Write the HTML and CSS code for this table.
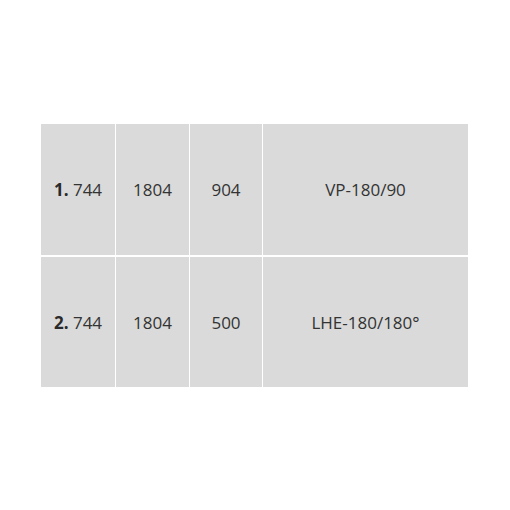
FILE: index.html
```html
<!DOCTYPE html>
<html>
<head>
<meta charset="utf-8">
<link rel="stylesheet" href="styles.css">
</head>
<body>
<div class="table">
  <div class="cell"><b>1.</b>&nbsp;744</div>
  <div class="cell">1804</div>
  <div class="cell">904</div>
  <div class="cell">VP-180/90</div>
  <div class="cell"><b>2.</b>&nbsp;744</div>
  <div class="cell">1804</div>
  <div class="cell">500</div>
  <div class="cell">LHE-180/180°</div>
</div>
</body>
</html>
```
FILE: styles.css
```css
html, body {
  margin: 0;
  padding: 0;
  background: #ffffff;
}
body {
  padding: 124px 0 0 41px;
}
.table {
  display: grid;
  grid-template-columns: 74px 73px 72px 205px;
  grid-template-rows: 131px 130px;
  column-gap: 1px;
  row-gap: 2px;
  width: 427px;
}
.cell {
  background: #dadada;
  display: flex;
  align-items: center;
  justify-content: center;
  font-family: "Open Sans", "Liberation Sans", sans-serif;
  font-size: 17px;
  color: #333333;
}
.cell b {
  font-weight: 700;
  color: #2a2a2a;
}
```
